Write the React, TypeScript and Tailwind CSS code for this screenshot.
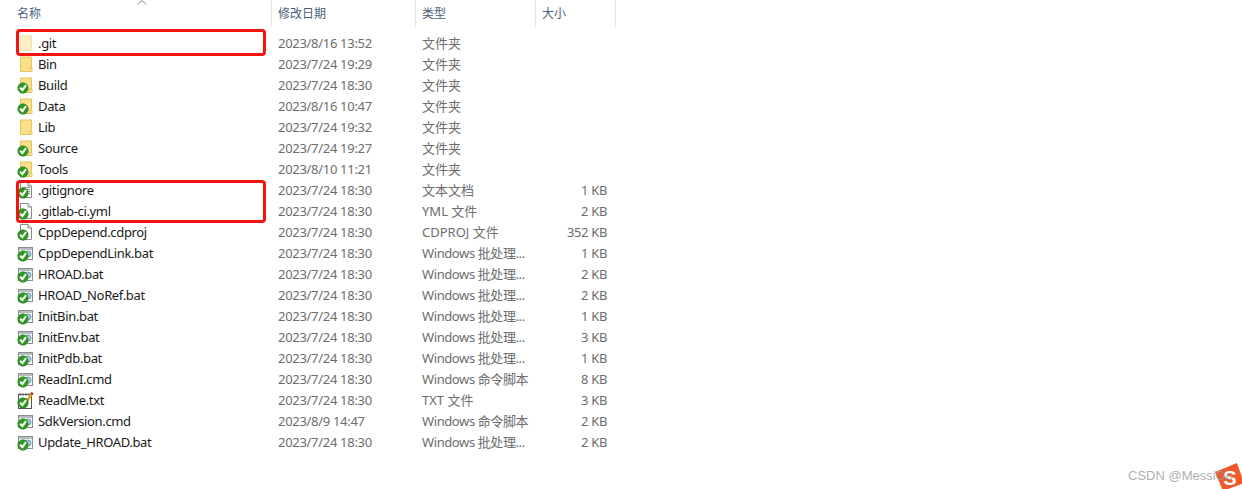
const font = { fontFamily: '"Noto Sans", "Noto Sans CJK SC", sans-serif' };

type IconKind = "folder" | "folderOk" | "textOk" | "fileOk" | "batOk" | "noteOk";

const rows: [string, IconKind, string, string, string, boolean?][] = [
  [".git", "folder", "2023/8/16 13:52", "文件夹", "", true],
  ["Bin", "folder", "2023/7/24 19:29", "文件夹", ""],
  ["Build", "folderOk", "2023/7/24 18:30", "文件夹", ""],
  ["Data", "folderOk", "2023/8/16 10:47", "文件夹", ""],
  ["Lib", "folder", "2023/7/24 19:32", "文件夹", ""],
  ["Source", "folderOk", "2023/7/24 19:27", "文件夹", ""],
  ["Tools", "folderOk", "2023/8/10 11:21", "文件夹", ""],
  [".gitignore", "textOk", "2023/7/24 18:30", "文本文档", "1 KB"],
  [".gitlab-ci.yml", "fileOk", "2023/7/24 18:30", "YML 文件", "2 KB"],
  ["CppDepend.cdproj", "fileOk", "2023/7/24 18:30", "CDPROJ 文件", "352 KB"],
  ["CppDependLink.bat", "batOk", "2023/7/24 18:30", "Windows 批处理...", "1 KB"],
  ["HROAD.bat", "batOk", "2023/7/24 18:30", "Windows 批处理...", "2 KB"],
  ["HROAD_NoRef.bat", "batOk", "2023/7/24 18:30", "Windows 批处理...", "2 KB"],
  ["InitBin.bat", "batOk", "2023/7/24 18:30", "Windows 批处理...", "1 KB"],
  ["InitEnv.bat", "batOk", "2023/7/24 18:30", "Windows 批处理...", "3 KB"],
  ["InitPdb.bat", "batOk", "2023/7/24 18:30", "Windows 批处理...", "1 KB"],
  ["ReadInI.cmd", "batOk", "2023/7/24 18:30", "Windows 命令脚本", "8 KB"],
  ["ReadMe.txt", "noteOk", "2023/7/24 18:30", "TXT 文件", "3 KB"],
  ["SdkVersion.cmd", "batOk", "2023/8/9 14:47", "Windows 命令脚本", "2 KB"],
  ["Update_HROAD.bat", "batOk", "2023/7/24 18:30", "Windows 批处理...", "2 KB"],
];

function Check() {
  return (
    <g>
      <circle cx="6" cy="11" r="5.2" fill="#2f9a20" stroke="#1f7a16" strokeWidth="0.6" />
      <path d="M3.2 10.8 L5.4 13.2 L9 8.2" fill="none" stroke="#fff" strokeWidth="2" />
    </g>
  );
}

function FileIcon({ kind, dim }: { kind: IconKind; dim?: boolean }) {
  const isFolder = kind === "folder" || kind === "folderOk";
  return (
    <svg width="17" height="17" viewBox="0 0 17 17" className={dim ? "shrink-0 opacity-50" : "shrink-0"}>
      {isFolder && (
        <>
          <path d="M3.5 1 H14.5 V15.5 H3.5 Z" fill="#fbe08c" stroke="#e6c35c" />
          <path d="M12.5 15.5 V12.5 H15 V15.5 Z" fill="#fdf0bd" stroke="#e6c35c" />
        </>
      )}
      {(kind === "textOk" || kind === "fileOk") && (
        <>
          <path d="M3.5 .5 H11 L14.5 4 V15.5 H3.5 Z" fill="#fff" stroke="#8a8a8a" />
          <path d="M11 .5 V4 H14.5" fill="#e8e8e8" stroke="#8a8a8a" />
          {kind === "textOk" && <path d="M5 5.5 H13 M5 7.5 H13 M8 9.5 H13 M10 11.5 H13" stroke="#8b9a8b" />}
        </>
      )}
      {kind === "batOk" && (
        <>
          <rect x="1.5" y="2.5" width="14" height="12" fill="#f4f6f8" stroke="#8a8f94" />
          <rect x="2" y="3" width="13" height="2" fill="#b8bdc2" />
          <circle cx="11" cy="9" r="3" fill="#a8cde0" stroke="#6f9bb3" />
        </>
      )}
      {kind === "noteOk" && (
        <>
          <rect x="1.5" y="2.5" width="13" height="14" fill="#fff" stroke="#555" />
          <path d="M3 1 V4 M6 1 V4 M9 1 V4 M12 1 V4" stroke="#666" />
          <path d="M3 6.5 H11 M3 8.5 H10" stroke="#999" />
          <path d="M9 11 L15 1.5" stroke="#e2a21a" strokeWidth="2.4" />
          <path d="M14.4 2.4 L15.6 .6" stroke="#a8201a" strokeWidth="2.4" />
        </>
      )}
      {kind !== "folder" && <Check />}
    </svg>
  );
}

export default function App() {
  return (
    <div className="relative h-[489px] w-[1242px] overflow-hidden bg-white text-[13px]" style={font}>
      <div className="relative grid h-[27px] w-[617px] grid-cols-[271px_144px_120px_81px] text-[12px] text-[#4c607a]">
        <div className="pl-[17px] pt-[5px]">名称</div>
        <div className="border-l border-[#e5e5e5] pl-[6px] pt-[5px]">修改日期</div>
        <div className="border-l border-[#e5e5e5] pl-[6px] pt-[5px]">类型</div>
        <div className="border-x border-[#e5e5e5] pl-[6px] pt-[5px]">大小</div>
        <svg width="10" height="5" viewBox="0 0 10 5" className="absolute left-[137px] top-0">
          <path d="M.5 4.5 L5 .5 L9.5 4.5" fill="none" stroke="#8a8a8a" />
        </svg>
      </div>
      <div className="mt-[6px] w-[616px]">
        {rows.map(([name, kind, date, type, size, dim]) => (
          <div key={name} className="grid h-[21px] grid-cols-[271px_144px_120px_81px] items-center">
            <div className="flex items-center pl-[17px] text-[#1a1a1a]">
              <FileIcon kind={kind} dim={dim} />
              <span className="ml-1 whitespace-nowrap tracking-[-0.35px]">{name}</span>
            </div>
            <div className="whitespace-nowrap pl-[7px] tracking-[-0.3px] text-[#6d6d6d]">{date}</div>
            <div className={type.startsWith("Windows") ? "whitespace-nowrap pl-[7px] tracking-[-0.4px] text-[#6d6d6d]" : "whitespace-nowrap pl-[7px] text-[#6d6d6d]"}>{type}</div>
            <div className="whitespace-nowrap pr-[9px] text-right tracking-[-0.35px] text-[#6d6d6d]">{size}</div>
          </div>
        ))}
      </div>
      <div className="absolute left-4 top-[29px] h-[27px] w-[250px] rounded-sm border-[3px] border-[#f5130f]" />
      <div className="absolute left-4 top-[180px] h-[43px] w-[250px] rounded-sm border-[3px] border-[#f5130f]" />
      <svg width="30" height="28" viewBox="0 0 30 28" className="absolute left-[1214px] top-[463px]">
        <path d="M1 9 L23 0 L30 20 L9 28 Z" fill="#f1592a" />
        <text x="16" y="22" textAnchor="middle" fontSize="20" fontWeight="700" fill="#fff" fontFamily="Liberation Sans, sans-serif">S</text>
      </svg>
      <div className="absolute left-[1128px] top-[466px] whitespace-nowrap text-[13px] text-[#999999]/80" style={{ fontFamily: '"Liberation Sans", sans-serif' }}>
        CSDN @MessiGo
      </div>
    </div>
  );
}
